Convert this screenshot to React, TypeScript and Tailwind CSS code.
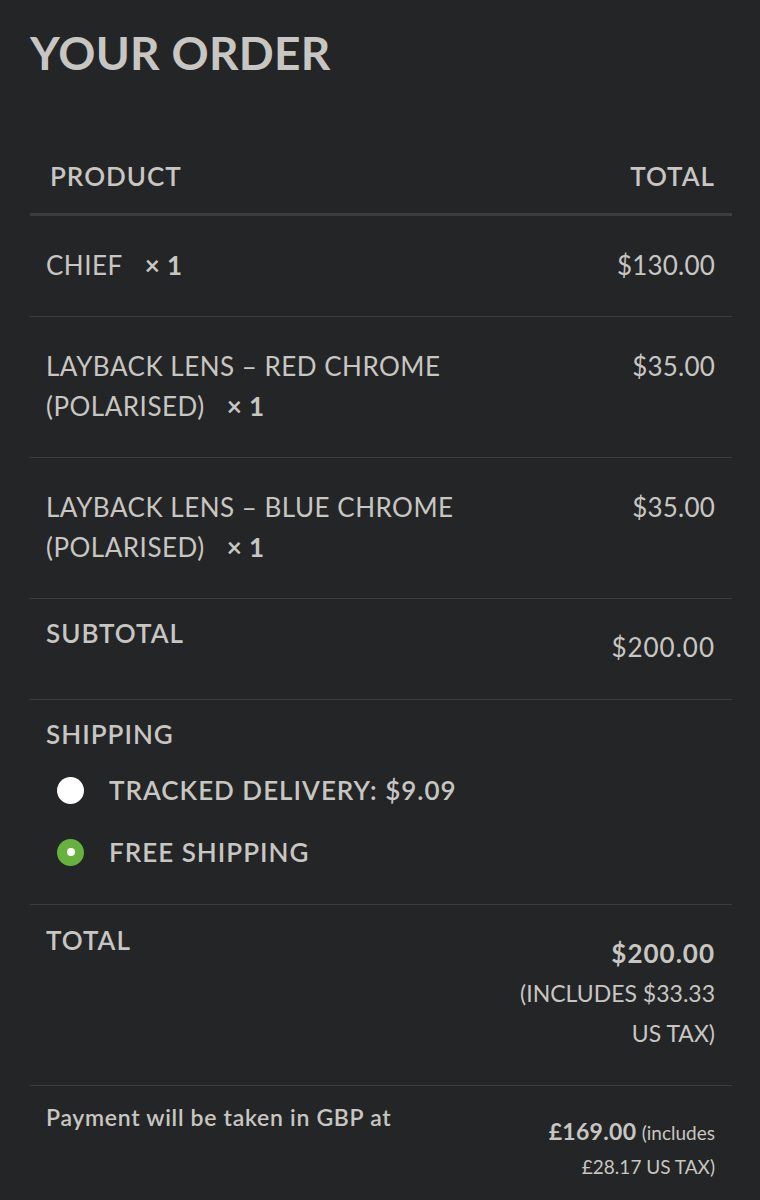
import React from 'react';

const items = [
  { name: ['CHIEF'], price: '$130.00' },
  { name: ['LAYBACK LENS – RED CHROME', '(POLARISED)'], price: '$35.00' },
  { name: ['LAYBACK LENS – BLUE CHROME', '(POLARISED)'], price: '$35.00' },
];

function Qty() {
  return <strong className="ml-[22px] font-bold">× 1</strong>;
}

export default function App() {
  return (
    <div className="min-h-[1200px] bg-[#242527] text-[#c8c6c2] font-['Lato',sans-serif] pl-[30px] pr-[28px] pt-[25px]">
      <h2 className="text-[46px] font-bold leading-[56px] tracking-[0.3px]">YOUR ORDER</h2>

      {/* header */}
      <div className="flex justify-between items-center pl-[20px] pr-[17px] pt-[75px] pb-[17px] border-b-[3px] border-[#3b3c3e] text-[26px] font-semibold leading-[40px] tracking-[1px]">
        <span>PRODUCT</span>
        <span>TOTAL</span>
      </div>

      {/* items */}
      {items.map((item, i) => (
        <div key={i} className="flex justify-between items-start pl-[16px] pr-[17px] pt-[29px] pb-[31px] border-b border-[#3b3c3e] text-[26px] leading-[40px]">
          <div className="tracking-[0.5px]">
            {item.name.map((line, j) => (
              <div key={j}>
                {line}
                {j === item.name.length - 1 && <Qty />}
              </div>
            ))}
          </div>
          <div className="tracking-[0.2px]">{item.price}</div>
        </div>
      ))}

      {/* subtotal */}
      <div className="flex justify-between items-start pl-[16px] pr-[17px] pb-[32px] border-b border-[#3b3c3e] text-[26px] leading-[40px]">
        <div className="pt-[14px] font-semibold tracking-[1px]">SUBTOTAL</div>
        <div className="pt-[28px] tracking-[1px]">$200.00</div>
      </div>

      {/* shipping */}
      <div className="pl-[16px] pr-[17px] pt-[14px] pb-[21px] border-b border-[#3b3c3e] text-[26px] leading-[40px] tracking-[1px]">
        <div className="font-semibold">SHIPPING</div>
        <ul className="mt-[5px]">
          <li className="flex items-center h-[62px] font-semibold">
            <span className="ml-[11px] mr-[25px] w-[27px] h-[27px] rounded-full bg-white" />
            TRACKED DELIVERY: $9.09
          </li>
          <li className="flex items-center h-[62px] font-semibold">
            <span className="ml-[11px] mr-[25px] w-[27px] h-[27px] rounded-full bg-[#67b13f] flex items-center justify-center">
              <span className="w-[8px] h-[8px] rounded-full bg-white" />
            </span>
            FREE SHIPPING
          </li>
        </ul>
      </div>

      {/* total */}
      <div className="flex justify-between items-start pl-[16px] pr-[17px] pb-[32px] border-b border-[#3b3c3e] text-[26px] leading-[40px]">
        <div className="pt-[15px] font-semibold tracking-[1px]">TOTAL</div>
        <div className="pt-[28px] text-right">
          <div className="font-bold tracking-[1px]">$200.00</div>
          <div className="text-[23px]">(INCLUDES $33.33</div>
          <div className="text-[23px]">US TAX)</div>
        </div>
      </div>

      {/* payment */}
      <div className="flex justify-between items-start pl-[16px] pr-[17px] text-[21px]">
        <div className="pt-[15px] leading-[32px] font-semibold text-[23px] tracking-[0.7px]">Payment will be taken in GBP at</div>
        <div className="pt-[28px] leading-[34px] text-right">
          <div>
            <strong className="font-bold text-[23px] tracking-[0.3px]">£169.00</strong> <span className="text-[19px]">(includes</span>
          </div>
          <div className="text-[19px]">£28.17 US TAX)</div>
        </div>
      </div>
    </div>
  );
}
